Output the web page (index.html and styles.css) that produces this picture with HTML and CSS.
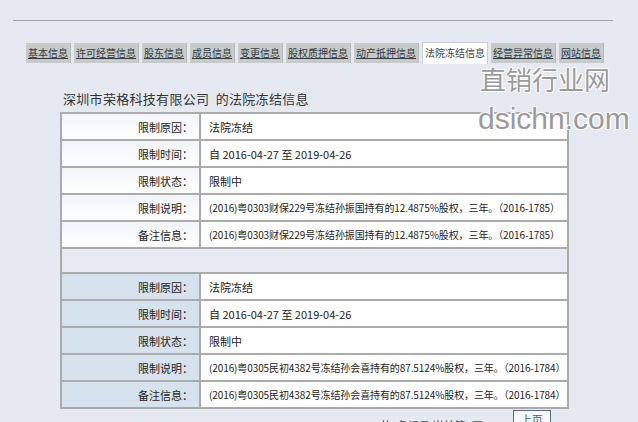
FILE: index.html
```html
<!DOCTYPE html>
<html lang="zh">
<head>
<meta charset="utf-8">
<link rel="stylesheet" href="styles.css">
</head>
<body>
<div class="page">
  <div class="rule"></div>
  <div class="tabs">
    <a class="tab">基本信息</a>
    <a class="tab">许可经营信息</a>
    <a class="tab">股东信息</a>
    <a class="tab">成员信息</a>
    <a class="tab">变更信息</a>
    <a class="tab">股权质押信息</a>
    <a class="tab">动产抵押信息</a>
    <a class="tab active">法院冻结信息</a>
    <a class="tab">经营异常信息</a>
    <a class="tab">网站信息</a>
  </div>
  <div class="title">深圳市荣格科技有限公司&nbsp; 的法院冻结信息</div>
  <table class="info">
    <tr><th>限制原因：</th><td>法院冻结</td></tr>
    <tr><th>限制时间：</th><td>自 2016-04-27 至 2019-04-26</td></tr>
    <tr><th>限制状态：</th><td>限制中</td></tr>
    <tr><th>限制说明：</th><td class="mono">(2016)粤0303财保229号冻结孙振国持有的12.4875%股权，三年。（2016-1785）</td></tr>
    <tr><th>备注信息：</th><td class="mono">(2016)粤0303财保229号冻结孙振国持有的12.4875%股权，三年。（2016-1785）</td></tr>
    <tr class="gap"><td colspan="2"></td></tr>
    <tr class="g2"><th>限制原因：</th><td>法院冻结</td></tr>
    <tr class="g2"><th>限制时间：</th><td>自 2016-04-27 至 2019-04-26</td></tr>
    <tr class="g2"><th>限制状态：</th><td>限制中</td></tr>
    <tr class="g2"><th>限制说明：</th><td class="mono">(2016)粤0305民初4382号冻结孙会喜持有的87.5124%股权，三年。（2016-1784）</td></tr>
    <tr class="g2"><th>备注信息：</th><td class="mono">(2016)粤0305民初4382号冻结孙会喜持有的87.5124%股权，三年。（2016-1784）</td></tr>
  </table>
  <div class="pager">
    <span class="pinfo">共2条记录 当前第1页</span>
    <span class="pbtn">上页</span>
  </div>
</div>
<div class="wm wm1">直销行业网</div>
<div class="wm wm2">dsichn.com</div>
</body>
</html>
```
FILE: styles.css
```css
html, body {
  margin: 0;
  padding: 0;
  background: #e5e9f2;
  width: 638px;
  height: 422px;
  overflow: hidden;
  font-family: "Noto Sans CJK SC", "Liberation Sans", sans-serif;
  color: #222;
}
.page {
  padding: 20px 0 0 13px;
}
.rule {
  width: 600px;
  height: 0;
  border-top: 1px solid #9ba6b7;
}
.tabs {
  display: flex;
  gap: 3px;
  margin: 22px 0 0 13px;
  white-space: nowrap;
}
.tab {
  display: block;
  flex: none;
  height: 20px;
  line-height: 20px;
  padding: 0 2px;
  background: #c6cac8;
  border-right: 1px solid #b4b8b6;
  font-size: 10px;
  color: #333a44;
  text-decoration: underline;
  white-space: nowrap;
}
.tab.active {
  background: #ffffff;
  text-decoration: none;
  color: #444;
  border: 1px solid #c8ccd6;
  border-bottom: none;
  height: 21px;
  margin-top: -1px;
}
.title {
  margin: 27px 0 0 50px;
  font-size: 13px;
  line-height: 16px;
  color: #333;
  letter-spacing: 0.3px;
}
.info {
  margin: 5px 0 0 47px;
  width: 509px;
  border-collapse: collapse;
  border: 1px solid #8c8c8c;
  font-size: 11px;
}
.info th, .info td {
  height: 25px;
  padding: 0;
  border: 2px solid #ababab;
  background: #ffffff;
}
.info th {
  width: 131px;
  text-align: right;
  font-weight: normal;
  padding-right: 6px;
  color: #222;
  background: linear-gradient(#f2f4f8, #ffffff);
}
.info td {
  padding-left: 8px;
  color: #222;
}
.info td.mono {
  font-size: 10px;
  letter-spacing: -0.1px;
}
.info tr.gap td {
  background: #e6ebf3;
  height: 23px;
}
.info tr.g2 th {
  background: #d6e3ee;
}
.pager {
  display: flex;
  align-items: flex-start;
  margin: 1px 0 0 367px;
  font-size: 11px;
  color: #555;
  gap: 30px;
  white-space: nowrap;
}
.pinfo {
  margin-top: 7px;
  filter: blur(0.6px);
}
.pbtn {
  border: 1px solid #5a6a88;
  background: #f6f8fb;
  padding: 0 7px;
  color: #3a5aa8;
  height: 16px;
  line-height: 16px;
}
.wm {
  position: absolute;
  color: #9a9a9a;
  text-shadow: 1px 1px 0 #ffffff, -1px -1px 0 #ffffff, 1px -1px 0 #fff, -1px 1px 0 #fff;
  white-space: nowrap;
}
.wm1 {
  left: 480px;
  top: 62px;
  font-size: 26px;
  line-height: 34px;
  font-family: "Noto Sans CJK SC", sans-serif;
}
.wm2 {
  left: 478px;
  top: 101px;
  font-size: 30px;
  font-family: "Liberation Sans", sans-serif;
  line-height: 36px;
}
```
